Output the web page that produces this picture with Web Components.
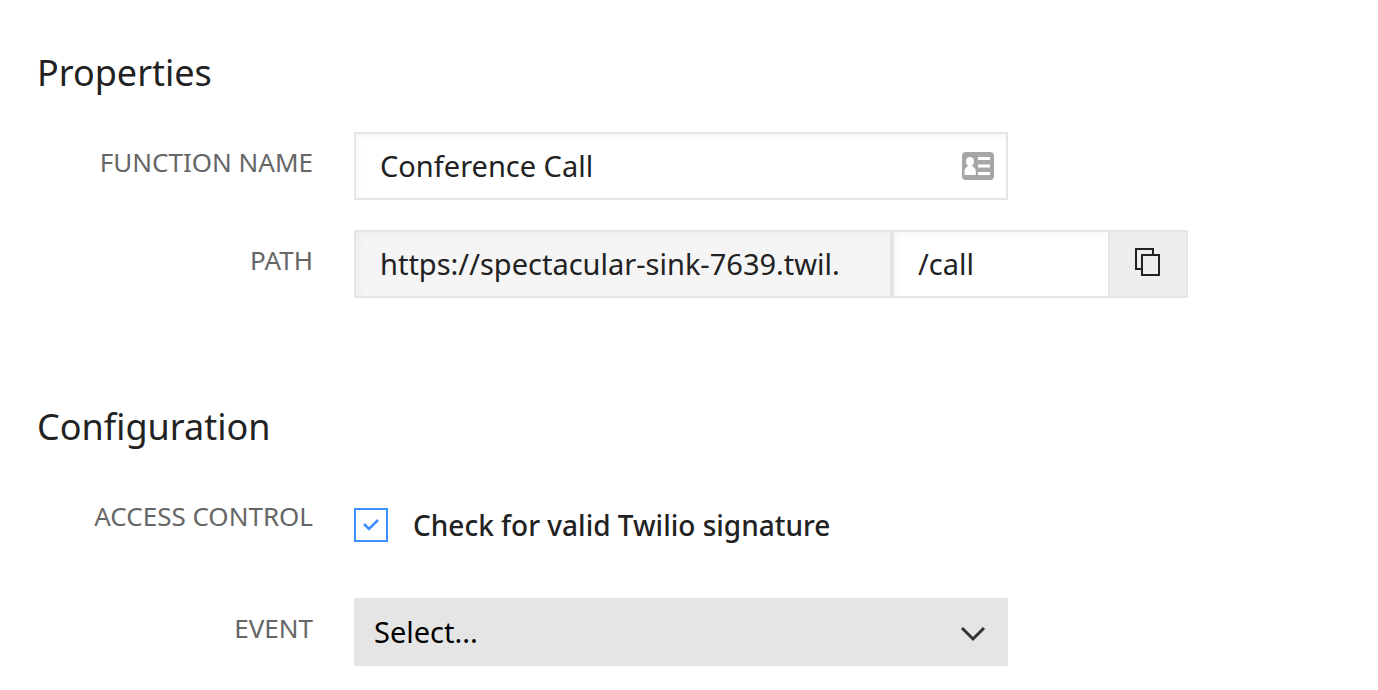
<!DOCTYPE html>
<html lang="en">
<head>
<meta charset="utf-8">
<meta name="viewport" content="width=device-width, initial-scale=1">
<title>Function properties</title>
<style>
  body {
    margin: 0;
    background: #fff;
    color: #222;
    font-family: "Noto Sans", sans-serif;
    font-size: 29px;
  }
</style>
</head>
<body>
<function-settings>
  <settings-section heading="Properties">
    <text-field label="Function Name" value="Conference Call"></text-field>
    <path-field label="Path" domain="https://spectacular-sink-7639.twil." value="/call"></path-field>
  </settings-section>
  <settings-section heading="Configuration">
    <check-field label="Access Control" checked>Check for valid Twilio signature</check-field>
    <select-field label="Event" placeholder="Select..."></select-field>
  </settings-section>
</function-settings>

<script>
const fieldStyles = `
  :host {
    display: grid;
    grid-template-columns: 276px minmax(0, 1fr);
    column-gap: 41px;
  }
  * {
    box-sizing: border-box;
  }
  .caption {
    color: #666;
    font-size: 26px;
    line-height: 60px;
    text-align: right;
    text-transform: uppercase;
    white-space: nowrap;
  }
  input, select, button {
    margin: 0;
    color: inherit;
    font: inherit;
    border-radius: 0;
  }
  .box {
    width: 100%;
    min-width: 0;
    height: 68px;
    padding: 0 24px 2px;
    border: 2px solid #e5e5e5;
    background: #fff;
    box-shadow: inset 4px 4px 8px -2px rgba(0, 0, 0, 0.04);
    outline: none;
  }
  .box:focus {
    border-color: #3b8fff;
  }
  svg {
    display: block;
  }
`;

class FunctionSettings extends HTMLElement {
  connectedCallback() {
    this.attachShadow({ mode: 'open' });
    this.shadowRoot.innerHTML = `
      <style>
        :host {
          display: block;
        }
        main {
          display: flex;
          flex-direction: column;
          gap: 105px;
          padding: 49px 37px 24px;
        }
      </style>
      <main><slot></slot></main>
    `;
  }
}

class SettingsSection extends HTMLElement {
  connectedCallback() {
    this.attachShadow({ mode: 'open' });
    this.shadowRoot.innerHTML = `
      <style>
        :host {
          display: block;
        }
        h2 {
          margin: 0 0 35px;
          font-size: 36px;
          font-weight: 400;
          line-height: 48px;
        }
        .fields {
          display: flex;
          flex-direction: column;
          gap: 30px;
        }
      </style>
      <section>
        <h2>${this.getAttribute('heading')}</h2>
        <div class="fields"><slot></slot></div>
      </section>
    `;
  }
}

class TextField extends HTMLElement {
  connectedCallback() {
    this.attachShadow({ mode: 'open' });
    this.shadowRoot.innerHTML = `
      <style>
        ${fieldStyles}
        .control {
          position: relative;
          max-width: 654px;
        }
        .box {
          padding-right: 60px;
        }
        svg {
          position: absolute;
          top: 20px;
          right: 14px;
        }
      </style>
      <label class="caption" for="field">${this.getAttribute('label')}</label>
      <div class="control">
        <input class="box" id="field" type="text" value="${this.getAttribute('value')}">
        <svg width="32" height="28" viewBox="0 0 32 28" aria-hidden="true">
          <rect width="32" height="28" rx="4" fill="#a6a6a6"/>
          <path fill="#fff" d="M8 5c2.500 0 4 1.900 4 4.300 0 1.900-.8 3.200-1.700 4.200v1c2 .8 3.500 2.400 3.500 5V23H2.400v-3.500c0-2.600 1.500-4.200 3.400-5v-1C4.800 12.500 4 11.200 4 9.300 4 6.900 5.500 5 8 5z"/>
          <path fill="#fff" d="M16 5h12v3H16zM16 12.500h12v3H16zM16 20h12v3H16z"/>
        </svg>
      </div>
    `;
  }
}

class PathField extends HTMLElement {
  connectedCallback() {
    this.attachShadow({ mode: 'open' });
    this.shadowRoot.innerHTML = `
      <style>
        ${fieldStyles}
        .control {
          display: flex;
          max-width: 834px;
        }
        .domain {
          flex: 1;
          background: #f5f5f5;
        }
        .path {
          flex: 0 1 218px;
        }
        button {
          display: grid;
          place-items: center;
          flex: 0 0 78px;
          padding: 0 0 4px;
          border: 2px solid #e5e5e5;
          border-left: 0;
          background: #eee;
          cursor: pointer;
        }
        button:hover {
          background: #e5e5e5;
        }
      </style>
      <label class="caption" for="path">${this.getAttribute('label')}</label>
      <div class="control">
        <input class="box domain" type="text" readonly aria-label="Domain" value="${this.getAttribute('domain')}">
        <input class="box path" id="path" type="text" value="${this.getAttribute('value')}">
        <button type="button" aria-label="Copy path">
          <svg width="26" height="28" viewBox="0 0 26 28" fill="none" stroke="#222" stroke-width="2" aria-hidden="true">
            <path d="M6 21H1V1h17v5"/>
            <path d="M7 7h17v20H7z"/>
          </svg>
        </button>
      </div>
    `;
  }
}

class CheckField extends HTMLElement {
  connectedCallback() {
    this.attachShadow({ mode: 'open' });
    this.shadowRoot.innerHTML = `
      <style>
        ${fieldStyles}
        .control {
          padding: 22px 0 26px;
        }
        .option {
          display: flex;
          gap: 25px;
          width: fit-content;
          font-size: 28px;
          font-weight: 500;
          line-height: 34px;
          cursor: pointer;
        }
        .tick {
          display: grid;
          flex: none;
        }
        .tick > * {
          grid-area: 1 / 1;
        }
        input {
          appearance: none;
          width: 34px;
          height: 34px;
          border: 2px solid #3b8fff;
          background: #fff;
        }
        svg {
          place-self: center;
          visibility: hidden;
          pointer-events: none;
        }
        input:checked + svg {
          visibility: visible;
        }
      </style>
      <span class="caption" id="caption">${this.getAttribute('label')}</span>
      <div class="control" role="group" aria-labelledby="caption">
        <label class="option" for="check">
          <span class="tick">
            <input id="check" type="checkbox" ${this.hasAttribute('checked') ? 'checked' : ''}>
            <svg width="16" height="12" viewBox="0 0 16 12" fill="none" stroke="#3b8fff" stroke-width="2.500" aria-hidden="true">
              <path d="M1 5l5 5 9-9"/>
            </svg>
          </span>
          <span><slot></slot></span>
        </label>
      </div>
    `;
  }
}

class SelectField extends HTMLElement {
  connectedCallback() {
    this.attachShadow({ mode: 'open' });
    this.shadowRoot.innerHTML = `
      <style>
        ${fieldStyles}
        .control {
          position: relative;
          max-width: 654px;
        }
        select {
          display: block;
          appearance: none;
          width: 100%;
          height: 68px;
          padding: 0 60px 2px 20px;
          border: 0;
          background: #e5e5e5;
          color: #000;
        }
        svg {
          position: absolute;
          top: 28px;
          right: 22px;
          pointer-events: none;
        }
      </style>
      <label class="caption" for="select">${this.getAttribute('label')}</label>
      <div class="control">
        <select id="select">
          <option>${this.getAttribute('placeholder')}</option>
        </select>
        <svg width="26" height="16" viewBox="0 0 26 16" fill="none" stroke="#333" stroke-width="3" aria-hidden="true">
          <path d="M2 2l11 11L24 2"/>
        </svg>
      </div>
    `;
  }
}

customElements.define('function-settings', FunctionSettings);
customElements.define('settings-section', SettingsSection);
customElements.define('text-field', TextField);
customElements.define('path-field', PathField);
customElements.define('check-field', CheckField);
customElements.define('select-field', SelectField);
</script>
</body>
</html>
